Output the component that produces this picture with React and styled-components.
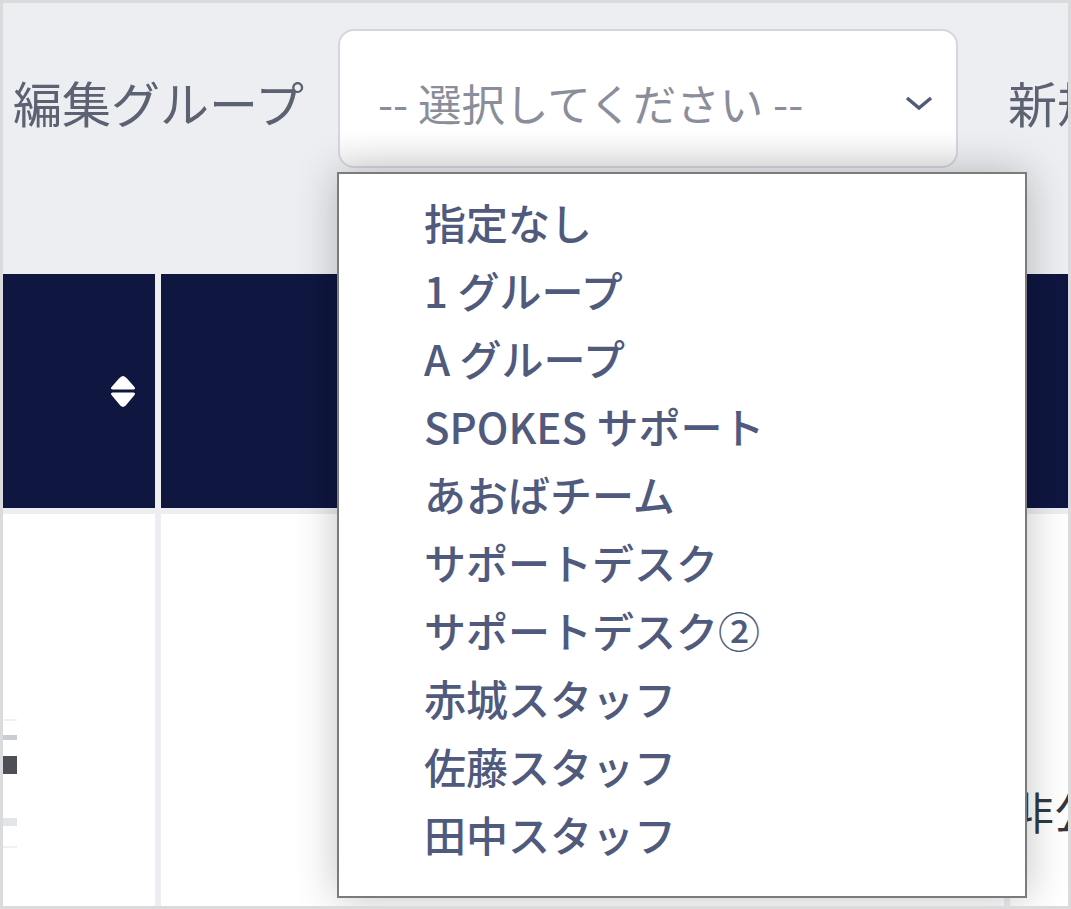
import React from "react"
import styled, { createGlobalStyle } from "styled-components"

const groups = [
  "指定なし",
  "1 グループ",
  "A グループ",
  "SPOKES サポート",
  "あおばチーム",
  "サポートデスク",
  "サポートデスク②",
  "赤城スタッフ",
  "佐藤スタッフ",
  "田中スタッフ",
]

const GlobalStyle = createGlobalStyle`
  html, body {
    margin: 0;
    padding: 0;
  }
  body {
    font-family: "Noto Sans CJK JP", "Noto Sans", sans-serif;
  }
`

const Page = styled.div`
  position: relative;
  box-sizing: border-box;
  width: 1071px;
  height: 909px;
  border: 3px solid #dadbdd;
  background: #eceef2;
  overflow: hidden;
`

const Toolbar = styled.div`
  display: flex;
  align-items: center;
  padding: 26px 0 0 10px;
  white-space: nowrap;
`

const Label = styled.span`
  flex: none;
  width: ${p => p.$w || "auto"};
  font-size: 49px;
  line-height: 1;
  padding-top: 6px;
  color: #5d6272;
  margin-right: 33px;
`

const SelectBox = styled.div`
  flex: none;
  box-sizing: border-box;
  width: 620px;
  height: 139px;
  display: flex;
  align-items: center;
  justify-content: space-between;
  padding: 8px 22px 0 38px;
  border: 2px solid #d3d6dc;
  border-radius: 16px;
  background: linear-gradient(#ffffff 75%, #f3f3f5);
  margin-right: 50px;
`

const Placeholder = styled.span`
  font-size: 43.5px;
  line-height: 1;
  color: #8a8e9a;
`

const TableGrid = styled.div`
  display: grid;
  grid-template-columns: 152px 843px 200px;
  grid-template-rows: 234px 400px;
  gap: 6px;
  margin-top: 106px;
`

const HeadCell = styled.div`
  background: #0f1640;
  display: flex;
  align-items: center;
  justify-content: flex-end;
  padding-right: ${p => p.$pr || 0}px;
`

const BodyCell = styled.div`
  background: #ffffff;
  padding-top: ${p => p.$pt || 0}px;
  overflow: hidden;
`

const Thumb = styled.div`
  width: 14px;
  margin-top: ${p => p.$mt}px;
  display: flex;
  flex-direction: column;
`

const ThumbLine = styled.div`
  height: ${p => p.$h}px;
  margin-bottom: ${p => p.$mb}px;
  background: ${p => p.$c};
`

const CellText = styled.span`
  font-size: 44px;
  line-height: 1;
  color: #333840;
  white-space: nowrap;
`

const Dropdown = styled.ul`
  position: absolute;
  left: 334px;
  top: 169px;
  box-sizing: border-box;
  width: 690px;
  height: 726px;
  margin: 0;
  padding: 14px 0 0 85px;
  list-style: none;
  background: #ffffff;
  border: 2px solid #7b7b7b;
  box-shadow: 0 0 40px rgba(0, 0, 0, 0.24);
`

const Option = styled.li`
  height: 68px;
  line-height: 68px;
  font-size: 42px;
  font-weight: 500;
  color: #4f5a7d;
  white-space: nowrap;
`

const Chevron = () => (
  <svg width="30" height="16" viewBox="0 0 30 16">
    <path d="M3 3 L15 13 L27 3" fill="none" stroke="#4f5a7d" strokeWidth="3.5" />
  </svg>
)

const SortIcon = () => (
  <svg width="26" height="33" viewBox="0 0 26 33">
    <path d="M13 1 Q11 1 9 3.5 L1.5 12 Q0 14.5 3 14.5 H23 Q26 14.5 24.5 12 L17 3.5 Q15 1 13 1 Z" fill="#fff" />
    <path d="M3 17.5 H23 Q26 17.5 24.5 20 L17 29 Q15 32 13 32 Q11 32 9 29 L1.5 20 Q0 17.5 3 17.5 Z" fill="#fff" />
  </svg>
)

export default function App() {
  return (
    <Page>
      <GlobalStyle />
      <Toolbar>
        <Label $w="292px">編集グループ</Label>
        <SelectBox>
          <Placeholder>-- 選択してください --</Placeholder>
          <Chevron />
        </SelectBox>
        <Label>新規作成</Label>
      </Toolbar>
      <TableGrid>
        <HeadCell $pr={19}>
          <SortIcon />
        </HeadCell>
        <HeadCell />
        <HeadCell />
        <BodyCell>
          <Thumb $mt={205}>
            <ThumbLine $h={2} $mb={14} $c="#eef0f2" />
            <ThumbLine $h={5} $mb={16} $c="#c9ccd2" />
            <ThumbLine $h={18} $mb={44} $c="#4e4f55" />
            <ThumbLine $h={8} $mb={20} $c="#e3e5e8" />
            <ThumbLine $h={2} $mb={0} $c="#eef0f2" />
          </Thumb>
        </BodyCell>
        <BodyCell />
        <BodyCell $pt={275}>
          <CellText>非公開</CellText>
        </BodyCell>
      </TableGrid>
      <Dropdown>
        {groups.map(g => (
          <Option key={g}>{g}</Option>
        ))}
      </Dropdown>
    </Page>
  )
}
